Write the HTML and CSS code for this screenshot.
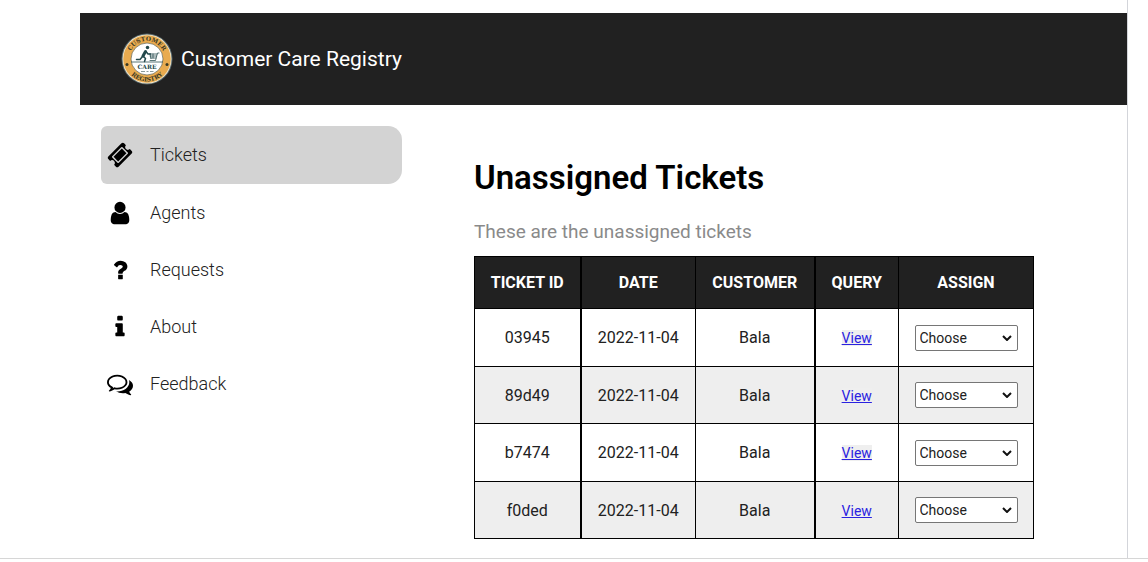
FILE: index.html
```html
<!DOCTYPE html>
<html lang="en">
<head>
<meta charset="utf-8">
<title>Customer Care Registry</title>
<link rel="stylesheet" href="styles.css">
</head>
<body>
<div class="page">
  <header class="topbar">
    <svg class="logo" viewBox="0 0 104 104" role="img" aria-label="Customer Care Registry logo">
      <defs>
        <path id="arc-top" d="M16 52a36 36 0 0 1 72 0"/>
        <path id="arc-bottom" d="M7 52a45 45 0 0 0 90 0"/>
      </defs>
      <circle cx="52" cy="52" r="51" fill="#56666a"/>
      <circle cx="52" cy="52" r="49" fill="#f3ead2"/>
      <circle cx="52" cy="52" r="47.500" fill="#e9ab4f"/>
      <circle cx="52" cy="52" r="32" fill="#fff" stroke="#6b6a55" stroke-width="1.500"/>
      <text class="logo-ring"><textPath href="#arc-top" startOffset="50%">CUSTOMER</textPath></text>
      <text class="logo-ring"><textPath href="#arc-bottom" startOffset="50%">REGISTRY</textPath></text>
      <circle cx="12" cy="63" r="3" fill="#3b3a25"/>
      <circle cx="92" cy="63" r="3" fill="#3b3a25"/>
      <g fill="none" stroke="#24494c" stroke-linecap="round" stroke-linejoin="round">
        <path d="M21 58h62" stroke-width="1.500"/>
        <path d="M49 37l-5 9" stroke-width="6"/>
        <path d="M45 47l4 4-2 6M43 47l-5 6h-7M50 37l4 5h5" stroke-width="3"/>
        <path d="M76 40h-3l-4 15H58M58 42h14M58 46h13M59 50h11M58 42l2 9M64 42v8" stroke-width="1.500"/>
      </g>
      <circle cx="53" cy="29" r="3.500" fill="#24494c"/>
      <text class="logo-care" x="52" y="71">CARE</text>
      <path d="M40 77h8M51 77h4M58 77h7" stroke="#8b9a9b" stroke-width="2"/>
    </svg>
    <span class="brand">Customer Care Registry</span>
  </header>
  <div class="body">
    <nav class="sidebar">
      <a class="nav-item active" href="#tickets">
        <svg class="icon" viewBox="0 0 1792 1792" aria-hidden="true"><path fill-rule="evenodd" d="M1024 452l316 316-572 572-316-316zm-211 979l618-618q19-19 19-45t-19-45l-362-362q-18-18-45-18t-45 18l-618 618q-19 19-19 45t19 45l362 362q18 18 45 18t45-18zm889-637l-907 908q-37 37-90.500 37t-90.500-37l-126-126q56-56 56-136t-56-136-136-56-136 56l-125-126q-37-37-37-90.500t37-90.500l907-906q37-37 90.500-37t90.500 37l125 125q-56 56-56 136t56 136 136 56 136-56l126 125q37 37 37 90.500t-37 90.500z"/></svg>
        <span>Tickets</span>
      </a>
      <a class="nav-item" href="#agents">
        <svg class="icon" viewBox="0 0 1792 1792" aria-hidden="true"><path d="M1536 1399q0 109-62.500 187t-150.500 78h-854q-88 0-150.500-78t-62.500-187q0-85 8.500-160.500t31.500-152 58.500-131 94-89 134.500-34.500q131 128 313 128t313-128q76 0 134.500 34.500t94 89 58.500 131 31.500 152 8.500 160.500zm-256-887q0 159-112.500 271.500t-271.500 112.500-271.500-112.500-112.500-271.500 112.500-271.500 271.500-112.500 271.500 112.500 112.500 271.500z"/></svg>
        <span>Agents</span>
      </a>
      <a class="nav-item" href="#requests">
        <svg class="icon" viewBox="0 0 1792 1792" aria-hidden="true"><path d="M1088 1256v240q0 16-12 28t-28 12h-240q-16 0-28-12t-12-28v-240q0-16 12-28t28-12h240q16 0 28 12t12 28zm316-600q0 54-15.500 101t-35 76.500-55 59.500-57.500 43.500-61 35.500q-41 23-68.500 65t-27.500 67q0 17-12 32.500t-28 15.500h-240q-15 0-25.500-18.500t-10.500-37.500v-45q0-83 65-156.500t143-108.500q59-27 84-56t25-76q0-42-46.500-74t-107.500-32q-65 0-108 29-35 25-107 115-13 16-31 16-12 0-25-8l-164-125q-13-10-15.500-25t5.500-28q160-266 464-266 80 0 161 31t146 83 106 127.500 41 158.500z"/></svg>
        <span>Requests</span>
      </a>
      <a class="nav-item" href="#about">
        <svg class="icon" viewBox="0 0 1792 1792" aria-hidden="true"><path d="M1216 1344v128q0 26-19 45t-45 19h-512q-26 0-45-19t-19-45v-128q0-26 19-45t45-19h64v-384h-64q-26 0-45-19t-19-45v-128q0-26 19-45t45-19h384q26 0 45 19t19 45v576h64q26 0 45 19t19 45zm-128-1152v192q0 26-19 45t-45 19h-256q-26 0-45-19t-19-45v-192q0-26 19-45t45-19h256q26 0 45 19t19 45z"/></svg>
        <span>About</span>
      </a>
      <a class="nav-item" href="#feedback">
        <svg class="icon" viewBox="0 0 1792 1792" aria-hidden="true"><path d="M704 384q-153 0-286 52t-211.500 141-78.500 191q0 82 53 158t149 132l97 56-35 84q34-20 62-39l44-31 53 10q78 14 153 14 153 0 286-52t211.500-141 78.500-191-78.500-191-211.500-141-286-52zm0-128q191 0 353.500 68.500t256.500 186.500 94 257-94 257-256.500 186.500-353.500 68.500q-86 0-176-16-124 88-278 128-36 9-86 16h-3q-11 0-20.500-8t-11.500-21q-1-3-1-6.500t.5-6.500 2-6l2.500-5 3.500-5.500 4-5 4.500-5 4-4.500q5-6 23-25t26-29.500 22.500-29 25-38.500 20.500-44q-124-72-195-177t-71-224q0-139 94-257t256.500-186.500 353.500-68.500zm822 1169q10 24 20.500 44t25 38.500 22.500 29 26 29.500 23 25q1 1 4 4.500t4.500 5 4 5 3.500 5.500l2.500 5 2 6 .5 6.500-1 6.500q-3 14-13 22t-22 7q-50-7-86-16-154-40-278-128-90 16-176 16-271 0-472-132 58 4 88 4 161 0 309-45t264-129q125-92 192-212t67-254q0-77-23-152 129 71 204 178t75 230q0 120-71 224.500t-195 176.500z"/></svg>
        <span>Feedback</span>
      </a>
    </nav>
    <main class="content">
      <h1 class="title">Unassigned Tickets</h1>
      <p class="subtitle">These are the unassigned tickets</p>
      <table class="tickets">
        <colgroup><col class="c-id"><col class="c-date"><col class="c-customer"><col class="c-query"><col class="c-assign"></colgroup>
        <thead>
          <tr><th>TICKET ID</th><th>DATE</th><th>CUSTOMER</th><th>QUERY</th><th>ASSIGN</th></tr>
        </thead>
        <tbody>
          <tr><td>03945</td><td>2022-11-04</td><td>Bala</td><td><a class="view" href="#t-03945">View</a></td><td><span class="picker"><select aria-label="Assign ticket 03945"><option>Choose</option></select><svg viewBox="0 0 10 6" aria-hidden="true"><path d="M1 1l4 4 4-4"/></svg></span></td></tr>
          <tr><td>89d49</td><td>2022-11-04</td><td>Bala</td><td><a class="view" href="#t-89d49">View</a></td><td><span class="picker"><select aria-label="Assign ticket 89d49"><option>Choose</option></select><svg viewBox="0 0 10 6" aria-hidden="true"><path d="M1 1l4 4 4-4"/></svg></span></td></tr>
          <tr><td>b7474</td><td>2022-11-04</td><td>Bala</td><td><a class="view" href="#t-b7474">View</a></td><td><span class="picker"><select aria-label="Assign ticket b7474"><option>Choose</option></select><svg viewBox="0 0 10 6" aria-hidden="true"><path d="M1 1l4 4 4-4"/></svg></span></td></tr>
          <tr><td>f0ded</td><td>2022-11-04</td><td>Bala</td><td><a class="view" href="#t-f0ded">View</a></td><td><span class="picker"><select aria-label="Assign ticket f0ded"><option>Choose</option></select><svg viewBox="0 0 10 6" aria-hidden="true"><path d="M1 1l4 4 4-4"/></svg></span></td></tr>
        </tbody>
      </table>
    </main>
  </div>
</div>
</body>
</html>
```
FILE: styles.css
```css
* { box-sizing: border-box; }

body {
  margin: 0;
  background: #fff;
  color: #212121;
  font-family: Roboto, "Liberation Sans", sans-serif;
  border-bottom: 1px solid #d6d6d6;
}

.page {
  margin-right: 20px;
  padding: 13px 0 19px 80px;
  border-right: 1px solid #d3d5da;
}

.topbar {
  display: flex;
  align-items: center;
  gap: 8px;
  padding: 20px 41px;
  background: #212121;
  color: #fff;
}

.logo { width: 52px; height: 52px; }

.logo-ring {
  font: bold 12px "DejaVu Serif", serif;
  fill: #3b3a25;
  text-anchor: middle;
}

.logo-care {
  font: bold 12px "DejaVu Serif", serif;
  fill: #24494c;
  text-anchor: middle;
}

.brand { font-size: 21px; line-height: 28px; }

.body {
  display: flex;
  align-items: flex-start;
  gap: 72px;
  padding: 21px 21px 0;
}

.sidebar { flex: 0 0 301px; }

.nav-item {
  display: flex;
  align-items: center;
  gap: 17px;
  padding: 14px 6px;
  border-radius: 6px 14px 14px 6px;
  color: #212121;
  font-size: 18px;
  font-weight: 300;
  line-height: 29px;
  text-decoration: none;
}

.nav-item.active {
  padding-bottom: 15px;
  background: #d3d3d3;
}

.icon { width: 26px; height: 26px; fill: #000; }

.content { padding-top: 31px; }

.title {
  margin: 0 0 20px;
  color: #000;
  font-size: 33px;
  font-weight: 600;
  line-height: 42px;
}

.subtitle {
  margin: 0 0 11px;
  color: #8a8a8a;
  font-size: 19px;
  line-height: 26px;
}

.tickets {
  border-collapse: collapse;
  table-layout: fixed;
  width: 560px;
  font-size: 16px;
  text-align: center;
}

.c-id { width: 106px; }
.c-date { width: 115px; }
.c-customer { width: 119px; }
.c-query { width: 84px; }

.tickets th,
.tickets td {
  padding: 0;
  border: 1px solid #000;
}

.tickets th:first-child,
.tickets td:first-child,
.tickets th:nth-child(3),
.tickets td:nth-child(3) { border-right-width: 2px; }

.tickets th {
  height: 52px;
  background: #212121;
  color: #fff;
  font-weight: 700;
}

.tickets td { height: 58px; }
.tickets tbody tr:nth-child(even) { background: #eee; }
.tickets tbody tr:nth-child(even) td { height: 57px; }

.view {
  background: #efefef;
  color: #2a22e0;
  font-size: 14px;
}

.picker {
  display: inline-grid;
  align-items: center;
  vertical-align: middle;
}

.picker select {
  grid-area: 1 / 1;
  width: 103px;
  height: 26px;
  padding: 0 4px;
  appearance: none;
  border: 1px solid #767676;
  border-radius: 2px;
  background: #fff;
  color: #212121;
  font: 14px Roboto, sans-serif;
}

.picker svg {
  grid-area: 1 / 1;
  justify-self: end;
  width: 10px;
  height: 6px;
  margin-right: 6px;
  pointer-events: none;
  fill: none;
  stroke: #111;
  stroke-width: 2;
}
```
